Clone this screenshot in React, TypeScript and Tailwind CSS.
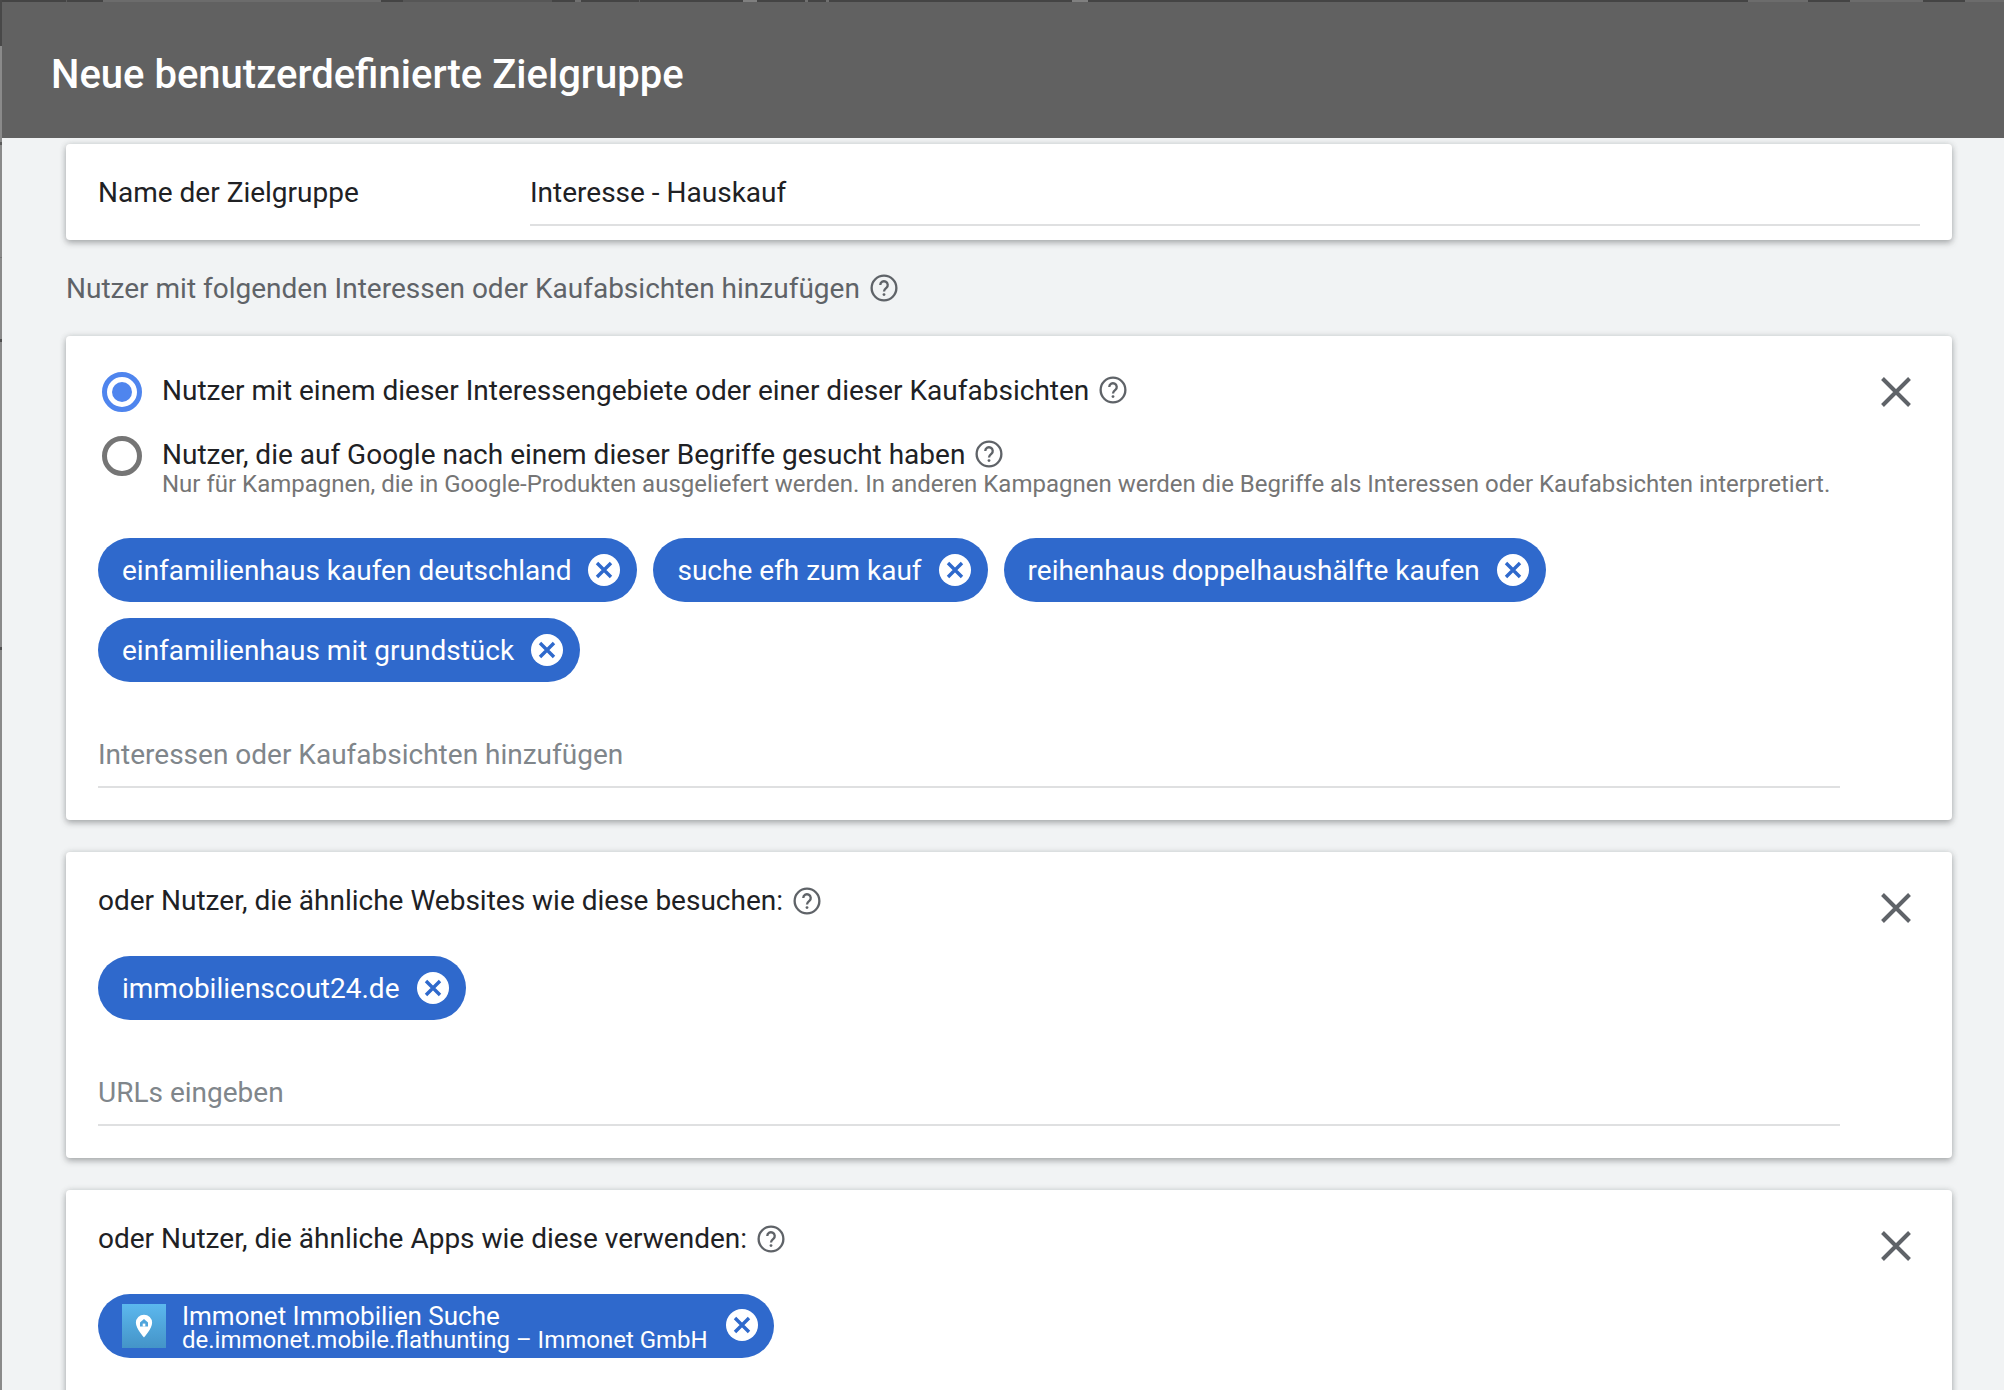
import React from "react";

const font = { fontFamily: "Roboto, sans-serif" };

function Help({ className = "" }: { className?: string }) {
  return (
    <svg viewBox="0 0 24 24" className={`w-[28px] h-[28px] shrink-0 ${className}`} fill="none">
      <circle cx="12" cy="12" r="10.6" stroke="#5f6368" strokeWidth="2" />
      <path d="M8.8 9.4a3.2 3.2 0 1 1 5.2 2.5c-1.1.9-2 1.5-2 3" stroke="#5f6368" strokeWidth="2" />
      <circle cx="12" cy="17.6" r="1.2" fill="#5f6368" />
    </svg>
  );
}

function Close({ className = "" }: { className?: string }) {
  return (
    <svg viewBox="0 0 30 30" className={`w-[30px] h-[30px] ${className}`} fill="none">
      <path d="M1.5 1.5 28.5 28.5M28.5 1.5 1.5 28.5" stroke="#5f6368" strokeWidth="4" />
    </svg>
  );
}

function ChipX({ className = "" }: { className?: string }) {
  return (
    <svg viewBox="0 0 32 32" className={`w-[32px] h-[32px] shrink-0 ${className}`}>
      <circle cx="16" cy="16" r="16" fill="#fff" />
      <path d="M9 9 23 23M23 9 9 23" stroke="#2f69cc" strokeWidth="3.4" />
    </svg>
  );
}

function Chip({ label }: { label: string }) {
  return (
    <div className="h-[64px] rounded-[32px] bg-[#2f69cc] pl-[24px] pr-[17px] flex items-center gap-[17px] text-white text-[28px] whitespace-nowrap">
      <span className="pt-[2px]">{label}</span>
      <ChipX />
    </div>
  );
}

function Field({ placeholder, pb }: { placeholder: string; pb: string }) {
  return (
    <div className={`mr-[112px] border-b-2 border-[#dfe0e1] ${pb} text-[28px] leading-[36px] text-[#80868b]`}>
      {placeholder}
    </div>
  );
}

const card = "bg-white rounded-[4px] shadow-[0_3px_6px_rgba(60,64,67,0.35),0_0_6px_rgba(60,64,67,0.15)] relative";

const stripSegments = [
  { h: 46, c: "bg-[#484848]" },
  { h: 96, c: "bg-[#8a8a8a]" },
  { h: 3, c: "bg-[#5c5c5c]" },
  { h: 112, c: "bg-[#8a8a8a]" },
  { h: 1, c: "bg-[#767676]" },
  { h: 81, c: "bg-[#8a8a8a]" },
  { h: 3, c: "bg-[#505050]" },
  { h: 305, c: "bg-[#8a8a8a]" },
  { h: 3, c: "bg-[#505050]" },
  { h: 740, c: "bg-[#8a8a8a]" },
];

const topMarks = [
  { ml: "ml-[64px]", w: "w-[1px]", c: "bg-[#5c5c5c]" },
  { ml: "ml-[36px]", w: "w-[278px]", c: "bg-[#6c6c6c]" },
  { ml: "ml-[22px]", w: "w-[149px]", c: "bg-[#565656]" },
  { ml: "ml-[23px]", w: "w-[6px]", c: "bg-[#707070]" },
  { ml: "ml-[58px]", w: "w-[1px]", c: "bg-[#5c5c5c]" },
  { ml: "ml-[103px]", w: "w-[14px]", c: "bg-[#808080]" },
  { ml: "ml-[48px]", w: "w-[3px]", c: "bg-[#707070]" },
  { ml: "ml-[18px]", w: "w-[3px]", c: "bg-[#707070]" },
  { ml: "ml-[243px]", w: "w-[16px]", c: "bg-[#808080]" },
  { ml: "ml-[660px]", w: "w-[60px]", c: "bg-[#6c6c6c]" },
  { ml: "ml-[42px]", w: "w-[73px]", c: "bg-[#6c6c6c]" },
  { ml: "ml-[42px]", w: "w-[45px]", c: "bg-[#6c6c6c]" },
];

export default function App() {
  return (
    <div style={font} className="w-[2004px] h-[1390px] overflow-hidden bg-[#666] flex">
      <div className="w-[2px] shrink-0 flex flex-col">
        {stripSegments.map((s, i) => (
          <div key={i} className={`${s.c} shrink-0`} style={{ height: s.h }} />
        ))}
      </div>
      <div className="flex-1 flex flex-col min-w-0 overflow-hidden">
        <div className="h-[2px] shrink-0 bg-[#444444] flex">
          {topMarks.map((m, i) => (
            <div key={i} className={`${m.ml} ${m.w} ${m.c} h-full shrink-0`} />
          ))}
        </div>
        <header className="h-[136px] shrink-0 bg-[#616161] flex items-center pl-[49px] pt-[10px] text-white text-[40px] font-medium">
          Neue benutzerdefinierte Zielgruppe
        </header>
        <main className="flex-1 bg-[#f1f3f4] pl-[64px] pr-[52px] pt-[6px]">
          <section className={`${card} h-[96px] pl-[32px] pr-[32px] flex`}>
            <div className="w-[432px] pt-[31px] text-[28px] leading-[36px] text-[#202124]">Name der Zielgruppe</div>
            <div className="flex-1 pt-[31px] h-[82px] border-b-2 border-[#dfe0e1] text-[28px] leading-[36px] text-[#202124]">
              Interesse - Hauskauf
            </div>
          </section>

          <div className="h-[96px] flex items-center gap-[10px] text-[28px] text-[#5f6368]">
            <span className="pt-[1px]">Nutzer mit folgenden Interessen oder Kaufabsichten hinzufügen</span>
            <Help />
          </div>

          <section className={`${card} h-[484px] pl-[32px] pt-[36px]`}>
            <Close className="absolute right-[41px] top-[41px]" />
            <div className="flex items-start">
              <div className="ml-[4px] w-[40px] h-[40px] rounded-full border-[5px] border-[#4f85ee] flex items-center justify-center">
                <div className="w-[20px] h-[20px] rounded-full bg-[#4f85ee]" />
              </div>
              <div className="ml-[20px] flex items-center gap-[10px] text-[28px] leading-[34px] text-[#202124]">
                <span className="pt-[2px]">Nutzer mit einem dieser Interessengebiete oder einer dieser Kaufabsichten</span>
                <Help className="-mt-[1px]" />
              </div>
            </div>
            <div className="flex items-start mt-[24px]">
              <div className="ml-[4px] w-[40px] h-[40px] rounded-full border-[5px] border-[#757575]" />
              <div className="ml-[20px]">
                <div className="flex items-center gap-[10px] text-[28px] leading-[34px] text-[#202124]">
                  <span className="pt-[2px]">Nutzer, die auf Google nach einem dieser Begriffe gesucht haben</span>
                  <Help className="-mt-[1px]" />
                </div>
                <div className="-mt-[1px] text-[24px] leading-[26px] text-[#757575] whitespace-nowrap">
                  Nur für Kampagnen, die in Google-Produkten ausgeliefert werden. In anderen Kampagnen werden die Begriffe als Interessen oder Kaufabsichten interpretiert.
                </div>
              </div>
            </div>
            <div className="flex flex-wrap gap-x-[16px] gap-y-[16px] mt-[41px] mr-[112px]">
              <Chip label="einfamilienhaus kaufen deutschland" />
              <Chip label="suche efh zum kauf" />
              <Chip label="reihenhaus doppelhaushälfte kaufen" />
              <Chip label="einfamilienhaus mit grundstück" />
            </div>
            <div className="mt-[55px]">
              <Field placeholder="Interessen oder Kaufabsichten hinzufügen" pb="pb-[13px]" />
            </div>
          </section>

          <section className={`${card} h-[306px] mt-[32px] pl-[32px] pt-[32px]`}>
            <Close className="absolute right-[41px] top-[41px]" />
            <div className="flex items-center gap-[10px] text-[28px] leading-[34px] text-[#202124]">
              <span>oder Nutzer, die ähnliche Websites wie diese besuchen:</span>
              <Help />
            </div>
            <div className="flex mt-[38px]">
              <Chip label="immobilienscout24.de" />
            </div>
            <div className="mt-[55px]">
              <Field placeholder="URLs eingeben" pb="pb-[13px]" />
            </div>
          </section>

          <section className={`${card} h-[300px] mt-[32px] pl-[32px] pt-[32px]`}>
            <Close className="absolute right-[41px] top-[41px]" />
            <div className="flex items-center gap-[10px] text-[28px] leading-[34px] text-[#202124]">
              <span>oder Nutzer, die ähnliche Apps wie diese verwenden:</span>
              <Help />
            </div>
            <div className="flex mt-[38px]">
              <div className="h-[64px] rounded-[32px] bg-[#2f69cc] pl-[24px] pr-[16px] flex items-center text-white whitespace-nowrap">
                <div className="w-[44px] h-[44px] bg-gradient-to-b from-[#5cb8ee] to-[#4494c8] flex items-center justify-center">
                  <svg viewBox="0 0 24 24" className="w-[26px] h-[26px]">
                    <path d="M12 1.5a7.5 7.5 0 0 0-7.5 7.5c0 5.5 7.5 13.5 7.5 13.5s7.5-8 7.5-13.5A7.5 7.5 0 0 0 12 1.5z" fill="#fff" />
                    <path d="M12 5.5 8.3 8.7v3.8h7.4V8.7z" fill="#4fa5dc" />
                    <rect x="10.8" y="9.8" width="2.4" height="2.7" fill="#fff" />
                  </svg>
                </div>
                <div className="ml-[16px] pt-[3px]">
                  <div className="text-[26px] leading-[24px]">Immonet Immobilien Suche</div>
                  <div className="text-[24px] leading-[24px]">de.immonet.mobile.flathunting – Immonet GmbH</div>
                </div>
                <ChipX className="ml-[18px] -mt-[2px]" />
              </div>
            </div>
          </section>
        </main>
      </div>
    </div>
  );
}
